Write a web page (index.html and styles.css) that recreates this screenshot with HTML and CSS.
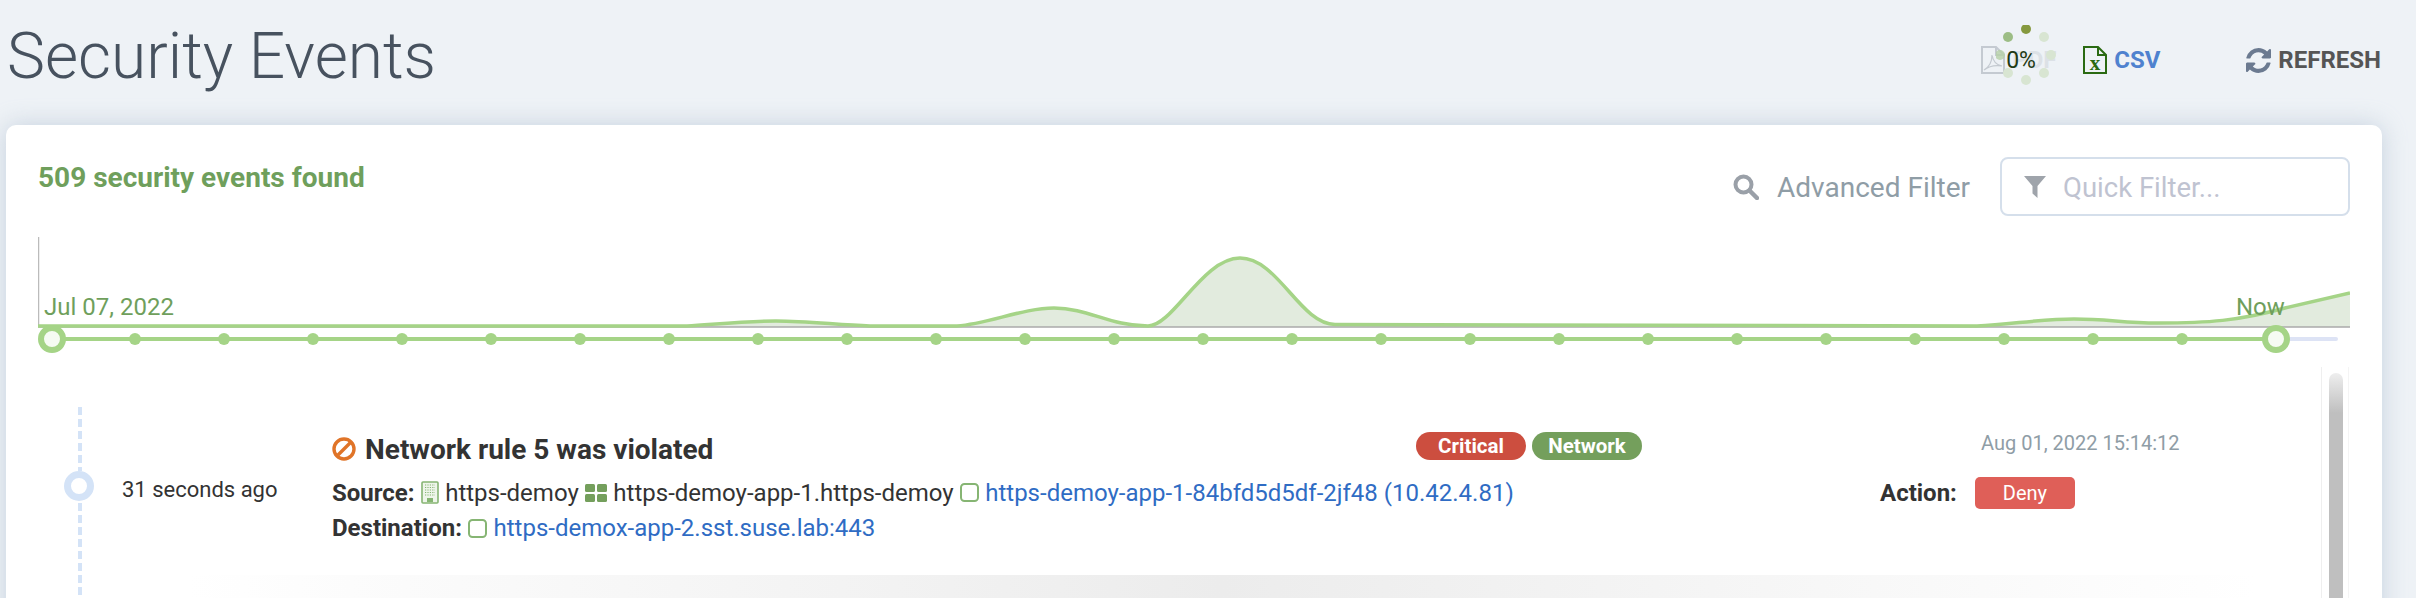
FILE: index.html
```html
<!DOCTYPE html>
<html lang="en">
<head>
  <meta charset="UTF-8"/>
  <title>Security Events</title>
  <link rel="stylesheet" href="styles.css">
</head>
<body>
  <header class="page-head">
    <h1>Security Events</h1>
    <div class="head-actions">
      <div class="export export-pdf">
        <svg class="doc-icon" viewBox="0 0 24 28" fill="none" stroke="#c4cad1" stroke-width="2">
          <path d="M1 1H15L23 9V27H1Z"/>
          <path d="M15 1V9H23"/>
          <path d="M3 24C8 21 11 15 11 9C12 15 15 19 21 20C15 19 8 20 3 24Z" stroke-width="1.2"/>
        </svg>
        <span class="pdf-label">PDF</span>
        <div class="spinner">
          <svg viewBox="0 0 60 60">
            <circle cx="30" cy="4" r="5" fill="#85993f"/>
            <circle cx="12" cy="12" r="5" fill="#9cbd85"/>
            <circle cx="4" cy="30" r="5" fill="#b5cfa8" fill-opacity=".8"/>
            <circle cx="12" cy="48" r="5" fill="#d8e5d2"/>
            <circle cx="30" cy="55" r="5" fill="#d8e5d2"/>
            <circle cx="48" cy="48" r="5" fill="#d8e5d2"/>
            <circle cx="55" cy="30" r="5" fill="#d8e5d2"/>
            <circle cx="48" cy="12" r="5" fill="#d8e5d2"/>
          </svg>
          <span class="spinner-text">0%</span>
        </div>
      </div>
      <div class="export export-csv">
        <svg class="doc-icon" viewBox="0 0 24 28" fill="none" stroke="#2a6a12" stroke-width="2">
          <path d="M1 1H15L23 9V27H1Z"/>
          <path d="M15 1V9H23"/>
          <text x="12" y="24" text-anchor="middle" class="doc-x">x</text>
        </svg>
        <span>CSV</span>
      </div>
      <div class="refresh">
        <svg viewBox="128 128 1536 1536" width="25" height="25" fill="#6b7a90">
          <path d="M1639 1056q0 5-1 7-64 268-268 434.5t-478 166.5q-146 0-282.5-55t-243.5-157l-129 129q-19 19-45 19t-45-19-19-45v-448q0-26 19-45t45-19h448q26 0 45 19t19 45-19 45l-137 137q71 66 161 102t187 36q134 0 250-65t186-179q11-17 53-117 8-23 30-23h192q13 0 22.5 9.5t9.5 22.5zm25-800v448q0 26-19 45t-45 19h-448q-26 0-45-19t-19-45 19-45l138-138q-148-137-349-137-134 0-250 65t-186 179q-11 17-53 117-8 23-30 23h-199q-13 0-22.5-9.5t-9.5-22.5v-7q65-268 270-434.5t480-166.5q146 0 284 55.5t245 156.5l130-129q19-19 45-19t45 19 19 45z"/>
        </svg>
        <span>REFRESH</span>
      </div>
    </div>
  </header>

  <main class="card">
    <div class="toolbar">
      <div class="count">509 security events found</div>
      <div class="filters">
        <div class="adv-filter">
          <svg viewBox="0 0 26 26" width="26" height="26" fill="none" stroke="#9aa0a8">
            <circle cx="10.5" cy="10.5" r="8" stroke-width="4"/>
            <path d="M16.5 16.5L24 24" stroke-width="4.5" stroke-linecap="round"/>
          </svg>
          <span>Advanced Filter</span>
        </div>
        <div class="quick-filter">
          <svg viewBox="0 0 22 22" width="22" height="22" fill="#9fa4ab">
            <path d="M0 0H22L13.5 10V22L8.5 17.5V10Z"/>
          </svg>
          <span>Quick Filter...</span>
        </div>
      </div>
    </div>

    <div class="chart">
      <svg class="chart-svg" viewBox="0 0 2312 91" width="2312" height="91">
        <path fill="#e2ebde" d="M0 89H649C680 87 710 84 738 84C770 84 800 88 832 89H919C950 87 985 71 1016 71C1050 71 1072 89 1110 89C1135 89 1165 21 1202 21C1240 21 1262 87 1297 87.5L1939 89C1975 87 2005 82 2036 82C2070 82 2085 86 2120 86C2170 86 2200 84 2247 71C2268 66 2290 61 2312 56V90H0Z"/>
        <path stroke="#aaaaaa" stroke-width="1.5" d="M0 90H2312"/>
        <path stroke="#bbbbbb" stroke-width="1.5" d="M0.5 0V90"/>
        <path fill="none" stroke="#a5d487" stroke-width="3.5" d="M0 89H649C680 87 710 84 738 84C770 84 800 88 832 89H919C950 87 985 71 1016 71C1050 71 1072 89 1110 89C1135 89 1165 21 1202 21C1240 21 1262 87 1297 87.5L1939 89C1975 87 2005 82 2036 82C2070 82 2085 86 2120 86C2170 86 2200 84 2247 71C2268 66 2290 61 2312 56"/>
      </svg>
      <span class="chart-label chart-from">Jul 07, 2022</span>
      <span class="chart-label chart-to">Now</span>
    </div>

    <div class="slider">
      <span class="handle"></span>
      <span class="tick"></span><span class="tick"></span><span class="tick"></span><span class="tick"></span>
      <span class="tick"></span><span class="tick"></span><span class="tick"></span><span class="tick"></span>
      <span class="tick"></span><span class="tick"></span><span class="tick"></span><span class="tick"></span>
      <span class="tick"></span><span class="tick"></span><span class="tick"></span><span class="tick"></span>
      <span class="tick"></span><span class="tick"></span><span class="tick"></span><span class="tick"></span>
      <span class="tick"></span><span class="tick"></span><span class="tick"></span><span class="tick"></span>
      <span class="handle"></span>
    </div>

    <div class="timeline">
      <div class="rail">
        <div class="rail-top"></div>
        <div class="rail-dot"></div>
        <div class="rail-bottom"></div>
      </div>
      <div class="events">
        <div class="event">
          <div class="event-time">31 seconds ago</div>
          <div class="event-body">
            <div class="event-title">
              <svg viewBox="0 0 24 24" width="24" height="24" fill="none" stroke="#e07428" stroke-width="3.4">
                <circle cx="12" cy="12" r="10"/>
                <path d="M5 19L19 5"/>
              </svg>
              <span>Network rule 5 was violated</span>
            </div>
            <div class="event-tags">
              <span class="tag tag-critical">Critical</span>
              <span class="tag tag-network">Network</span>
            </div>
            <div class="event-date">Aug 01, 2022 15:14:12</div>

            <div class="event-line event-source">
              <b>Source:</b>
              <svg viewBox="0 0 18 23" width="18" height="23">
                <rect x="1" y="1" width="16" height="21" rx="1" fill="#eef5ea" stroke="#86b573" stroke-width="1.6"/>
                <path d="M4 4H14M4 6.5H14M4 9H14M4 11.5H14M4 14H14" stroke="#86b573" stroke-width="1.2" stroke-dasharray="1.2 1.2"/>
                <path d="M6 21V17H12V21Z" fill="#86b573"/>
              </svg>
              <span>https-demoy</span>
              <svg viewBox="0 0 22 18" width="22" height="18" fill="#749f5c">
                <rect x="0" y="0" width="10" height="8" rx="1.5"/>
                <rect x="12" y="0" width="10" height="8" rx="1.5"/>
                <rect x="0" y="10" width="10" height="8" rx="1.5"/>
                <rect x="12" y="10" width="10" height="8" rx="1.5"/>
              </svg>
              <span>https-demoy-app-1.https-demoy</span>
              <svg class="pod-icon" viewBox="0 0 19 19" width="19" height="19">
                <rect x="1" y="1" width="17" height="17" rx="3.5"/>
              </svg>
              <a href="#">https-demoy-app-1-84bfd5d5df-2jf48 (10.42.4.81)</a>
            </div>
            <div class="event-action">
              <b>Action:</b>
              <span class="action-badge">Deny</span>
            </div>

            <div class="event-line event-dest">
              <b>Destination:</b>
              <svg class="pod-icon" viewBox="0 0 19 19" width="19" height="19">
                <rect x="1" y="1" width="17" height="17" rx="3.5"/>
              </svg>
              <a href="#">https-demox-app-2.sst.suse.lab:443</a>
            </div>
          </div>
        </div>
        <div class="event-sep"></div>
      </div>
      <div class="scrollbar"><div class="scroll-thumb"></div></div>
    </div>
  </main>
</body>
</html>
```

FILE: styles.css
```css
:root {
  --bg: #eef2f6;
  --green: #a5d487;
  --green-text: #6f9f5c;
  --blue-light: #d4e3f7;
  --muted: #8f9da6;
  --text: #333333;
  --link: #2f6cc4;
}
*, *::before, *::after { margin:0; padding:0; box-sizing:border-box; }
body {
  height: 598px;
  overflow: hidden;
  background: var(--bg);
  font-family: 'Roboto', sans-serif;
  color: var(--text);
}

/* Page header */
.page-head {
  display: flex;
  align-items: flex-start;
  justify-content: space-between;
  height: 125px;
  padding: 0 35px 0 7px;
}
.page-head h1 {
  font-size: 64px;
  font-weight: 300;
  line-height: 76px;
  margin-top: 19px;
  color: #47525f;
}
.head-actions {
  display: flex;
  align-items: center;
  margin-top: 46px;
  height: 28px;
}
.export { display:flex; align-items:center; gap:7px; font-size:24px; font-weight:700; }
.doc-icon { width:24px; height:28px; }
.doc-x { font-family:'Liberation Serif',serif; font-size:21px; font-weight:700; fill:#2a6a12; stroke:none; }
.export-pdf { position:relative; width:102px; }
.pdf-label { color:#47525f; opacity:.1; }
.export-csv { color:#4f82cf; }
.spinner { position:absolute; left:15px; top:-21px; width:60px; height:60px; }
.spinner svg { display:block; width:60px; height:60px; }
.spinner-text {
  position: absolute;
  left: 10px;
  top: 22px;
  font-size: 23px;
  line-height: 27px;
  font-weight: 400;
  color: #1f3a14;
}
.refresh {
  display: flex;
  align-items: center;
  gap: 7px;
  margin-left: 86px;
  font-size: 24px;
  font-weight: 700;
  color: #555555;
}

/* Card */
.card {
  margin: 0 34px 0 6px;
  padding-left: 32px;
  height: 600px;
  background: #fff;
  border-radius: 10px 10px 0 0;
  box-shadow: 0 0 24px rgba(150,170,195,.45);
}
.toolbar {
  display: flex;
  justify-content: space-between;
  align-items: flex-start;
  height: 112px;
  padding-right: 32px;
}
.count { margin-top:38px; font-size:28px; line-height:30px; font-weight:700; color:var(--green-text); }
.filters { display:flex; align-items:center; margin-top:32px; }
.adv-filter { display:flex; align-items:center; gap:18px; font-size:28px; color:var(--muted); margin-right:30px; }
.quick-filter {
  display: flex;
  align-items: center;
  gap: 17px;
  width: 350px;
  height: 59px;
  padding-left: 22px;
  border: 2px solid #d5dfeb;
  border-radius: 8px;
  font-size: 27.5px;
  color: #bfc3d1;
}
.adv-filter span, .quick-filter span { margin-top:2px; }

/* Chart and range slider */
.chart { position:relative; height:88px; }
.chart-svg { display:block; }
.chart-label { position:absolute; font-size:24px; line-height:26px; color:var(--green-text); }
.chart-from { left:6px; top:57px; }
.chart-to { left:2198px; top:57px; }
.slider {
  position: relative;
  display: flex;
  width: 2300px;
  height: 28px;
  padding-right: 48px;
}
.slider::before {
  content: '';
  position: absolute;
  left: 14px; right: 0; top: 12px;
  height: 4px;
  background: #dde3f5;
  border-radius: 2px;
}
.slider::after {
  content: '';
  position: absolute;
  left: 14px; right: 62px; top: 12px;
  height: 4px;
  background: var(--green);
}
.tick { position:relative; z-index:1; flex:none; width:89px; display:flex; align-items:center; justify-content:center; }
.tick::before { content:''; width:12px; height:12px; border-radius:50%; background:var(--green); }
.handle { position:relative; z-index:1; flex:none; width:28px; height:28px; border-radius:50%; background:#f6fbf3; border:6px solid var(--green); }
.handle:first-child { margin-right:24px; }
.handle:last-child { margin-left:auto; }

/* Timeline list */
.timeline { display:flex; margin-top:14px; margin-left:-32px; height:240px; overflow:hidden; }
.rail { flex:none; display:flex; flex-direction:column; align-items:center; width:30px; margin-left:58px; padding-top:40px; }
.rail-top, .rail-bottom {
  width: 4px;
  margin-left: 2px;
  background: repeating-linear-gradient(180deg, var(--blue-light) 0 8px, transparent 8px 12px);
}
.rail-top { height:64px; }
.rail-bottom { flex:1; margin-top:2px; }
.rail-dot { flex:none; width:30px; height:30px; border:7px solid var(--blue-light); border-radius:50%; }
.events { flex:1; padding-top:40px; padding-left:28px; }
.event { display:flex; height:168px; }
.event-time { flex:none; width:210px; padding-top:70px; font-size:22px; line-height:26px; }
.event-body {
  flex: 1;
  display: grid;
  grid-template-columns: 1084px 464px 1fr;
  grid-template-rows: 44px 33px 38px;
  align-content: start;
  padding-top: 25px;
}
.event-title { display:flex; align-items:center; gap:9px; height:34px; font-size:28px; font-weight:700; }
.event-tags { display:flex; align-items:flex-start; gap:6px; }
.tag {
  display: flex;
  align-items: center;
  justify-content: center;
  width: 110px;
  height: 28px;
  border-radius: 14px;
  font-size: 20.5px;
  font-weight: 700;
  color: #fff;
}
.tag-critical { background:#cc4e3f; }
.tag-network { background:#749f5c; }
.event-date { padding-left:101px; font-size:20px; line-height:22px; color:var(--muted); }
.event-line { grid-column:span 2; display:flex; align-items:center; gap:6.3px; font-size:24px; white-space:nowrap; }
.event-line a { color:var(--link); text-decoration:none; }
.event-action { display:flex; align-items:center; gap:18px; font-size:24px; }
.action-badge {
  display: flex;
  align-items: center;
  justify-content: center;
  width: 100px;
  height: 32px;
  border-radius: 5px;
  background: #df5f58;
  color: #fff;
  font-size: 20px;
}
.pod-icon rect { fill:none; stroke:#86b573; stroke-width:2; }
.event-sep {
  height: 60px;
  background: linear-gradient(90deg, transparent 3%, #ececec 50%, transparent 97%);
}

/* Scrollbar */
.scrollbar {
  flex: none;
  width: 28px;
  padding: 6px 5px 0 7px;
  margin-right: 33px;
  border-left: 1px solid #efefef;
  border-right: 1px solid #f4f4f4;
}
.scroll-thumb {
  height: 300px;
  border-radius: 8px 8px 0 0;
  background: linear-gradient(180deg, #eeeeee 0, #bfbfbf 40px);
}
```
